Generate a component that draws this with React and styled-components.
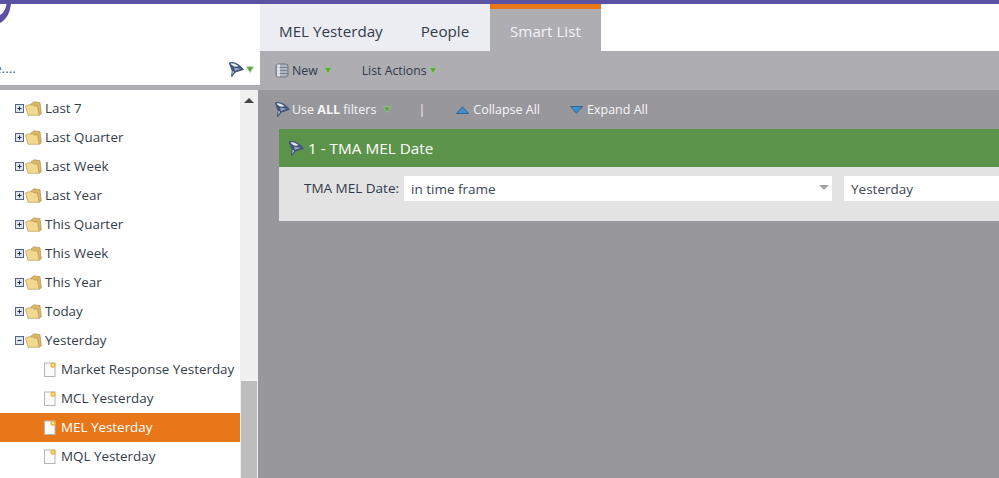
import React from 'react';
import styled, { createGlobalStyle } from 'styled-components';

const Global = createGlobalStyle`
    html, body { margin: 0; padding: 0; height: 100%; overflow: hidden; }
    body { font-family: 'Open Sans', 'Liberation Sans', sans-serif; background: #98979c; }
`;

const Page = styled.div`
    width: 999px;
    height: 478px;
    overflow: hidden;
    position: relative;
    display: flex;
    flex-direction: column;
`;

const TopBar = styled.div`
    height: 4px;
    background: #5b52a3;
    flex: none;
`;

const Logo = styled.svg`
    position: absolute;
    left: 0;
    top: 0;
`;

const Body = styled.div`
    flex: 1;
    display: flex;
    min-height: 0;
`;

const Side = styled.aside`
    width: 260px;
    flex: none;
    display: flex;
    flex-direction: column;
    background: #98979c;
`;

const SearchBox = styled.div`
    height: 86px;
    flex: none;
    background: #fff;
    display: flex;
    align-items: flex-end;
    justify-content: space-between;
    padding: 0 6px 7px 0;
    box-sizing: border-box;
    font-size: 13.5px;
    color: #4a5a70;
    line-height: 18px;
    border-bottom: 5px solid #aeadb2;
`;

const SearchText = styled.span`
    margin-left: -6px;
    margin-bottom: 1px;
`;

const IconRow = styled.span`
    display: flex;
    align-items: center;
    gap: 1px;
`;

const TreeWrap = styled.div`
    flex: 1;
    display: flex;
    min-height: 0;
    padding-right: 2px;
`;

const Tree = styled.ul`
    width: 240px;
    flex: none;
    margin: 0;
    padding: 4px 0 0;
    list-style: none;
    background: #fff;
`;

const Row = styled.li`
    height: 29px;
    display: flex;
    align-items: center;
    padding-left: ${(p) => (p.$leaf ? 44 : 15)}px;
    font-size: 13.4px;
    line-height: 27px;
    color: ${(p) => (p.$active ? '#fff' : '#333c4a')};
    background: ${(p) => (p.$active ? '#e8771a' : 'transparent')};
    white-space: nowrap;
`;

const RowLabel = styled.span`
    margin-left: ${(p) => (p.$leaf ? 5 : 3)}px;
`;

const Scroll = styled.div`
    width: 18px;
    flex: none;
    background: #f0f0f0;
    display: flex;
    flex-direction: column;
    align-items: center;
    justify-content: space-between;
    padding-top: 8px;
    box-sizing: border-box;
`;

const ScrollUp = styled.span`
    width: 0;
    height: 0;
    border-left: 5px solid transparent;
    border-right: 5px solid transparent;
    border-bottom: 5px solid #444;
`;

const ScrollThumb = styled.div`
    width: 16px;
    height: 97px;
    background: #bdbdbd;
`;

const Main = styled.main`
    flex: 1;
    min-width: 0;
    display: flex;
    flex-direction: column;
`;

const Tabs = styled.div`
    height: 47px;
    flex: none;
    display: flex;
    background: #fff;
`;

const TabGroup = styled.div`
    width: 230px;
    display: flex;
    background: #ecedf3;
`;

const Tab = styled.div`
    font-size: 15.2px;
    line-height: 22px;
    white-space: nowrap;
    box-sizing: border-box;
    padding: ${(p) => (p.$active ? '11px 20px 0' : '16px 19px 0')};
    color: ${(p) => (p.$active ? '#f4f4f6' : '#333b4a')};
    background: ${(p) => (p.$active ? '#aeadb2' : 'transparent')};
    border-top: ${(p) => (p.$active ? '5px solid #e8771a' : 'none')};
    width: ${(p) => (p.$active ? '111px' : 'auto')};
`;

const Toolbar = styled.div`
    height: 39px;
    flex: none;
    background: #aeadb2;
    display: flex;
    align-items: center;
    padding-left: 15px;
    font-size: 12.3px;
    color: #2f3a4c;
`;

const ToolItem = styled.span`
    display: flex;
    align-items: center;
    white-space: nowrap;
    margin-right: ${(p) => p.$gap || 0}px;
`;

const ActionBar = styled.div`
    height: 39px;
    flex: none;
    display: flex;
    align-items: center;
    padding-left: 14px;
    font-size: 12.5px;
    color: #f5f5f7;
`;

const ActionLabel = styled.span`
    margin-left: 1px;
`;

const Separator = styled.span`
    margin: 0 31px 0 27px;
`;

const Filter = styled.section`
    margin-left: 19px;
    flex: none;
`;

const FilterHead = styled.div`
    height: 38px;
    background: #5b934b;
    color: #fff;
    display: flex;
    align-items: center;
    gap: 3px;
    padding-left: 9px;
    font-size: 15.3px;
    font-weight: 500;
    white-space: nowrap;
`;

const FilterBody = styled.div`
    height: 54px;
    background: #e3e3e3;
    display: flex;
    padding: 9px 0 0 25px;
    box-sizing: border-box;
    font-size: 13.5px;
    color: #2f3a4c;
    white-space: nowrap;
`;

const FieldLabel = styled.span`
    line-height: 25px;
    margin-right: 5px;
`;

const Select = styled.div`
    width: ${(p) => p.$w}px;
    height: 25px;
    background: #fff;
    margin-right: 12px;
    padding: 0 7px;
    box-sizing: border-box;
    line-height: 26px;
    position: relative;
    color: #3c4656;
    flex: none;
`;

const Caret = styled.span`
    position: absolute;
    right: 3px;
    top: 9px;
    width: 0;
    height: 0;
    border-left: 5px solid transparent;
    border-right: 5px solid transparent;
    border-top: 5px solid #a5a5a5;
`;

const Spacer = styled.span`
    width: ${(p) => p.$w}px;
    flex: none;
`;

function GreenArrow() {
    return (
        <svg width="8" height="7" viewBox="0 0 8 7" style={{ flex: 'none' }}>
            <path d="M0.5 0.8h7L4 6.5z" fill="#5aa63c" stroke="#9ed68a" strokeWidth="0.7" />
        </svg>
    );
}

// funnel with a pale mouth, seen from the side, spout going down-left
function Funnel({ size = 17 }) {
    return (
        <svg width={size} height={size} viewBox="0 0 17 17" style={{ flex: 'none' }}>
            <path d="M1 1.6C3 .4 7 .8 10 3c2.400 1.700 4.800 4 6 5.700L7.500 11.500 4 16 3 15.400 3.800 10 1 2.600z" fill="#41557a" />
            <path d="M2.600 2.400C5 1.800 8 3 10.500 5 9 6 6.500 6 4.800 4.800 3.800 4.200 3 3.200 2.600 2.400z" fill="#e4e9f1" />
            <path d="M6 6.800 13 7.800 7 10z" fill="#93a5c0" />
            <path d="M4.600 10 6 10.800 4.500 14z" fill="#e6ebf2" />
        </svg>
    );
}

function Expander({ open }) {
    return (
        <svg width="9" height="9" viewBox="0 0 9 9" style={{ flex: 'none' }}>
            <rect x="0.5" y="0.5" width="8" height="8" fill="#dfe5f0" stroke="#55657f" />
            <path d="M2.500 4.500h4" stroke="#1f2b40" />
            {!open && <path d="M4.500 2.500v4" stroke="#1f2b40" />}
        </svg>
    );
}

function Folder() {
    return (
        <svg width="17" height="15" viewBox="0 0 17 15" style={{ marginLeft: 1, flex: 'none' }}>
            <path d="M6 3 9 .7l6 1 1.300 10.800-1.500 1.700L6 8.500z" fill="#dcb766" stroke="#a5874a" strokeWidth="0.6" />
            <path d="M.5 5 3.500 3.800h4l1.700 1.200h3.300l1.700 9.300H3z" fill="#f3d88f" stroke="#ad8f4e" strokeWidth="0.6" />
        </svg>
    );
}

function ListDoc() {
    return (
        <svg width="12" height="15" viewBox="0 0 12 15" style={{ flex: 'none' }}>
            <rect x="0.5" y="1" width="10.500" height="13.500" fill="#fbfbfb" stroke="#b5b5b5" />
            <circle cx="9" cy="3.200" r="2.600" fill="#f0b840" />
            <circle cx="9" cy="3.200" r="1" fill="#fff2c8" />
        </svg>
    );
}

function Database() {
    return (
        <svg width="14" height="15" viewBox="0 0 14 15" style={{ marginRight: 3, flex: 'none' }}>
            <rect x="1" y="1" width="12" height="13" rx="2.500" fill="#aeb5c0" stroke="#5a6472" strokeWidth="0.8" />
            <path d="M1 4.500h12M1 7.500h12M1 10.500h12" stroke="#69737f" strokeWidth="0.8" />
            <rect x="2" y="1.500" width="3" height="12" fill="#f2f4f6" opacity="0.7" />
        </svg>
    );
}

function TriUp() {
    return (
        <svg width="13" height="8" viewBox="0 0 13 8" style={{ marginRight: 4, flex: 'none' }}>
            <path d="M.5 7.500 6.500 .8l6 6.700z" fill="#3f8fd0" stroke="#1d4f80" strokeWidth="0.7" />
        </svg>
    );
}

function TriDown() {
    return (
        <svg width="13" height="8" viewBox="0 0 13 8" style={{ marginRight: 4, flex: 'none' }}>
            <path d="M.5 .5h12L6.500 7.200z" fill="#3f8fd0" stroke="#1d4f80" strokeWidth="0.7" />
        </svg>
    );
}

const folders = ['Last 7', 'Last Quarter', 'Last Week', 'Last Year', 'This Quarter', 'This Week', 'This Year', 'Today'];
const lists = ['Market Response Yesterday', 'MCL Yesterday', 'MEL Yesterday', 'MQL Yesterday'];

export default function App() {
    return (
        <Page>
            <Global />
            <TopBar />
            <Logo width="14" height="26" viewBox="0 0 14 26">
                <path d="M6.500 3H11C10.300 13 6 20 0 23V15C3.500 13 6 9 6.500 3z" fill="#5b52a3" />
            </Logo>
            <Body>
                <Side>
                    <SearchBox>
                        <SearchText>e....</SearchText>
                        <IconRow>
                            <Funnel />
                            <GreenArrow />
                        </IconRow>
                    </SearchBox>
                    <TreeWrap>
                        <Tree>
                            {folders.map((name) => (
                                <Row key={name}>
                                    <Expander />
                                    <Folder />
                                    <RowLabel>{name}</RowLabel>
                                </Row>
                            ))}
                            <Row>
                                <Expander open />
                                <Folder />
                                <RowLabel>Yesterday</RowLabel>
                            </Row>
                            {lists.map((name) => (
                                <Row key={name} $leaf $active={name === 'MEL Yesterday'}>
                                    <ListDoc />
                                    <RowLabel $leaf>{name}</RowLabel>
                                </Row>
                            ))}
                        </Tree>
                        <Scroll>
                            <ScrollUp />
                            <ScrollThumb />
                        </Scroll>
                    </TreeWrap>
                </Side>
                <Main>
                    <Tabs>
                        <TabGroup>
                            <Tab>MEL Yesterday</Tab>
                            <Tab>People</Tab>
                        </TabGroup>
                        <Tab $active>Smart List</Tab>
                    </Tabs>
                    <Toolbar>
                        <ToolItem $gap={30}>
                            <Database />
                            New
                            <Spacer $w={6} />
                            <GreenArrow />
                        </ToolItem>
                        <ToolItem>
                            List Actions
                            <Spacer $w={2} />
                            <GreenArrow />
                        </ToolItem>
                    </Toolbar>
                    <ActionBar>
                        <ToolItem>
                            <Funnel />
                            <ActionLabel>
                                Use <b>ALL</b> filters
                            </ActionLabel>
                            <Spacer $w={7} />
                            <GreenArrow />
                        </ToolItem>
                        <Separator>|</Separator>
                        <ToolItem $gap={30}>
                            <TriUp />
                            Collapse All
                        </ToolItem>
                        <ToolItem>
                            <TriDown />
                            Expand All
                        </ToolItem>
                    </ActionBar>
                    <Filter>
                        <FilterHead>
                            <Funnel />
                            1 - TMA MEL Date
                        </FilterHead>
                        <FilterBody>
                            <FieldLabel>TMA MEL Date:</FieldLabel>
                            <Select $w={428}>
                                in time frame
                                <Caret />
                            </Select>
                            <Select $w={200}>Yesterday</Select>
                        </FilterBody>
                    </Filter>
                </Main>
            </Body>
        </Page>
    );
}
